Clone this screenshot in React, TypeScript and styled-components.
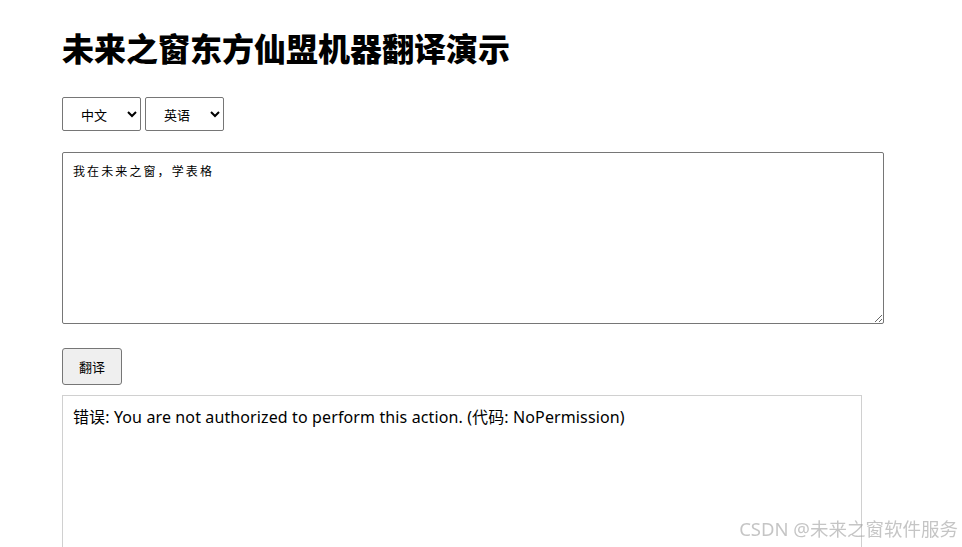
import React, { useState } from "react";
import styled, { createGlobalStyle } from "styled-components";

const GlobalStyle = createGlobalStyle`
  html, body {
    margin: 0;
    padding: 0;
    background: #fff;
    overflow: hidden;
  }
  body {
    font-family: "Noto Sans", "Noto Sans CJK SC", sans-serif;
    color: #000;
  }
`;

export default function App() {
  const [from, setFrom] = useState("zh");
  const [to, setTo] = useState("en");
  const [text, setText] = useState("我在未来之窗，学表格");

  return (
    <Page>
      <GlobalStyle />
      <Title>未来之窗东方仙盟机器翻译演示</Title>
      <LangRow>
        <LangSelect value={from} onChange={(e) => setFrom(e.target.value)}>
          <option value="zh">中文</option>
          <option value="en">英语</option>
        </LangSelect>
        <LangSelect value={to} onChange={(e) => setTo(e.target.value)}>
          <option value="en">英语</option>
          <option value="zh">中文</option>
        </LangSelect>
      </LangRow>
      <SourceText value={text} onChange={(e) => setText(e.target.value)} />
      <TranslateButton>翻译</TranslateButton>
      <Result>错误: You are not authorized to perform this action. (代码: NoPermission)</Result>
      <Watermark>CSDN @未来之窗软件服务</Watermark>
    </Page>
  );
}

const Page = styled.div`
  display: flex;
  flex-direction: column;
  align-items: flex-start;
  padding: 0 0 0 62px;
`;

const Title = styled.h1`
  margin: 26px 0 0;
  font-family: "Noto Sans CJK SC", sans-serif;
  font-size: 32px;
  font-weight: 900;
  line-height: 42px;
`;

const LangRow = styled.div`
  display: flex;
  gap: 4px;
  margin-top: 29px;
`;

const LangSelect = styled.select`
  width: 79px;
  height: 34px;
  padding: 0 6px 0 14px;
  border: 1px solid #767676;
  border-radius: 2px;
  background: #fff;
  font-family: "Noto Sans CJK SC", sans-serif;
  font-size: 13px;
  color: #000;
`;

const SourceText = styled.textarea`
  box-sizing: border-box;
  width: 822px;
  height: 172px;
  margin-top: 21px;
  padding: 8px 10px;
  border: 1px solid #767676;
  border-radius: 2px;
  font-family: "Noto Sans CJK SC", monospace;
  font-size: 12px;
  letter-spacing: 2.1px;
  line-height: 20px;
  color: #000;
  resize: both;
`;

const TranslateButton = styled.button`
  width: 60px;
  height: 37px;
  margin-top: 24px;
  border: 1px solid #767676;
  border-radius: 3px;
  background: #efefef;
  font-family: "Noto Sans CJK SC", sans-serif;
  font-size: 13px;
  color: #000;
`;

const Result = styled.div`
  box-sizing: border-box;
  width: 800px;
  min-height: 200px;
  margin-top: 10px;
  padding: 10px 10px;
  border: 1px solid #d0d0d0;
  font-size: 16px;
  letter-spacing: 0.12px;
  line-height: 22px;
`;

const Watermark = styled.div`
  position: fixed;
  right: 4px;
  bottom: 6px;
  font-family: "Noto Sans", "Noto Sans CJK SC", sans-serif;
  font-size: 18.5px;
  color: rgba(150, 150, 150, 0.55);
  pointer-events: none;
`;
